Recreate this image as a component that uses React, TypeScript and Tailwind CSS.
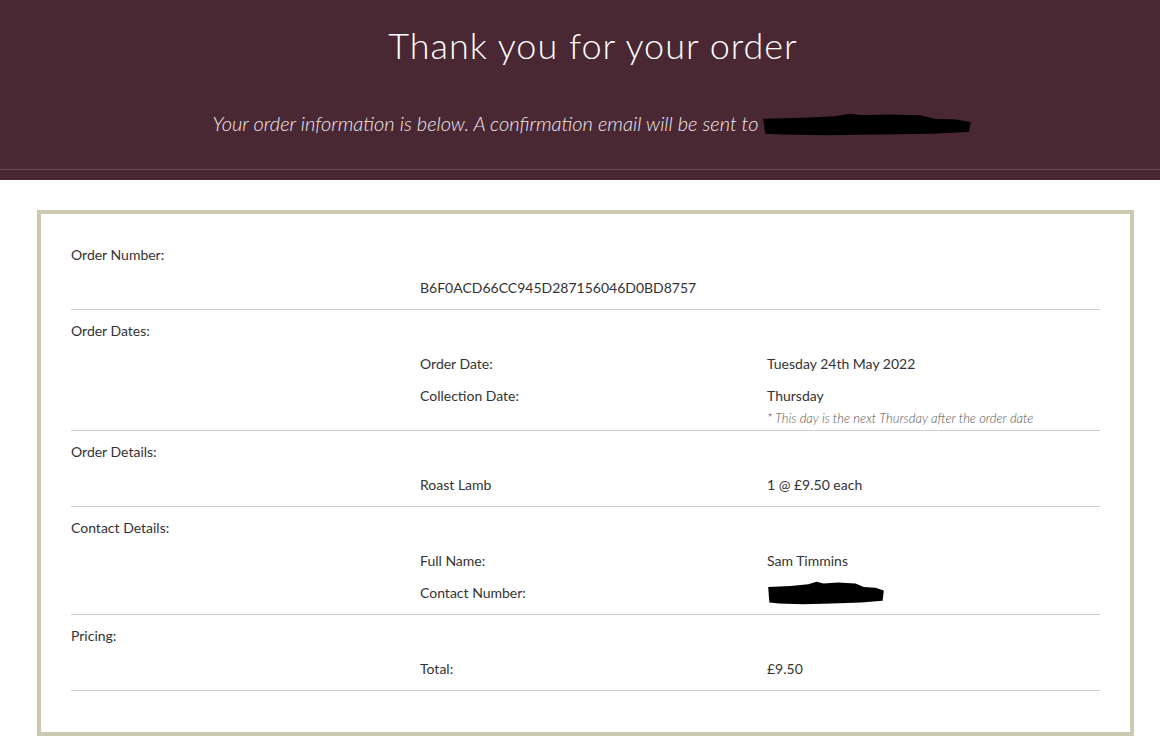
const rows: {
  label: string
  items: { name: string; value?: string; note?: string; redacted?: boolean }[]
}[] = [
  { label: "Order Number:", items: [{ name: "B6F0ACD66CC945D287156046D0BD8757" }] },
  {
    label: "Order Dates:",
    items: [
      { name: "Order Date:", value: "Tuesday 24th May 2022" },
      { name: "Collection Date:", value: "Thursday", note: "* This day is the next Thursday after the order date" },
    ],
  },
  { label: "Order Details:", items: [{ name: "Roast Lamb", value: "1 @ £9.50 each" }] },
  {
    label: "Contact Details:",
    items: [
      { name: "Full Name:", value: "Sam Timmins" },
      { name: "Contact Number:", redacted: true },
    ],
  },
  { label: "Pricing:", items: [{ name: "Total:", value: "£9.50" }] },
]

const Scribble = ({ w, h }: { w: number; h: number }) => (
  <svg width={w} height={h} viewBox="0 0 100 30" preserveAspectRatio="none">
    <path
      d="M1 8 L20 7 L35 5 L42 2 L48 4 L60 3 L75 4 L82 8 L92 9 L99 12 L98 24 L80 26 L55 27 L30 28 L10 27 L2 26 Z"
      fill="#000"
    />
  </svg>
)

const Section = ({ row }: { row: (typeof rows)[number] }) => (
  <div className="border-b border-[#cfcfcf] pt-[11px] pb-[5px]">
    <div className="h-5 leading-5 text-[14px]">{row.label}</div>
    <div className="mt-[7px]">
      {row.items.map((it) => (
        <div key={it.name} className="grid grid-cols-[349px_347px_1fr]">
          <div />
          <div className="h-8 leading-8 text-[14px]">{it.name}</div>
          <div>
            {it.redacted ? (
              <div className="h-8 flex items-center">
                <Scribble w={118} h={26} />
              </div>
            ) : (
              it.value && <div className="h-8 leading-8 text-[14px]">{it.value}</div>
            )}
            {it.note && (
              <div className="h-[13px] leading-[13px] text-[13px] italic font-light text-[#555]">{it.note}</div>
            )}
          </div>
        </div>
      ))}
    </div>
  </div>
)

export default function App() {
  return (
    <div className="w-[1160px] h-[750px] bg-white overflow-hidden font-['Lato',sans-serif] text-[#333]">
      <header className="h-[180px] bg-[#4a2833] flex flex-col">
        <div className="h-[169px] pl-[26px] flex flex-col items-center">
          <h1 className="mt-[23px] text-[36px] leading-[44px] font-light text-white tracking-[1px]">
            Thank you for your order
          </h1>
          <div className="mt-[42px] flex items-center text-[20px] leading-7 italic font-light text-[#f1e9ec]">
            <span>Your order information is below. A confirmation email will be sent to</span>
            <span className="ml-[3px] mt-[2px]">
              <Scribble w={212} h={25} />
            </span>
          </div>
        </div>
        <div className="h-px bg-[#6e4d58]" />
      </header>
      <main className="ml-[37px] mt-[30px] w-[1097px] border-4 border-[#cdc9b0] px-[30px] pt-5 pb-[41px]">
        {rows.map((r) => (
          <Section key={r.label} row={r} />
        ))}
      </main>
    </div>
  )
}
